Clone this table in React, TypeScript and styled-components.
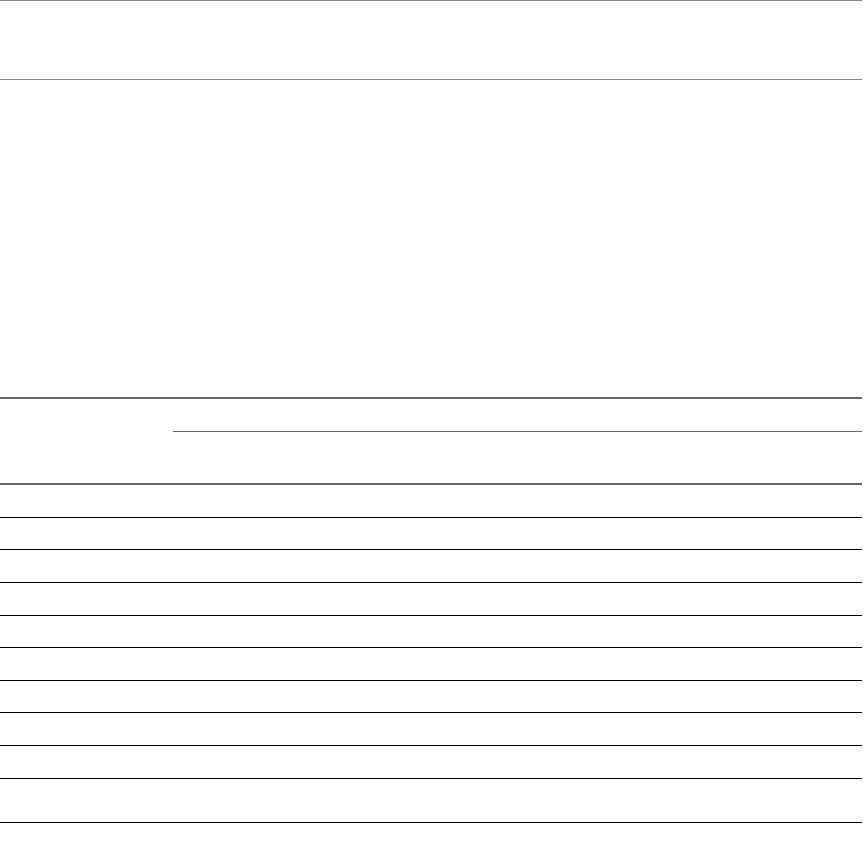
import React, { FC } from "react"
import styled, { createGlobalStyle } from "styled-components"

const GlobalStyle = createGlobalStyle`
  html, body {
    margin: 0;
    padding: 0;
    background: #fff;
    font-family: "Liberation Sans", Arial, sans-serif;
    font-size: 14px;
    color: #fff;
  }
`

const Page = styled.div`
  width: 862px;
`

const Header = styled.header`
  height: 78px;
  border-top: 1px solid #888;
  border-bottom: 1px solid #888;
`

const Intro = styled.section`
  height: 317px;
`

const Table = styled.table`
  width: 100%;
  border-collapse: collapse;
  table-layout: fixed;
  border-top: 2px solid #666;
`

const HeadCell = styled.th<{ $underline?: boolean; $tall?: boolean }>`
  height: ${(p) => (p.$tall ? "51px" : "32px")};
  padding: 0;
  font-weight: normal;
  border-bottom: ${(p) => (p.$underline ? "1px solid #666" : "none")};
`

const HeadRow = styled.tr`
  border-bottom: 2px solid #666;
`

const BodyRow = styled.tr<{ $tall?: boolean }>`
  border-bottom: 1px solid #000;

  td {
    height: ${(p) => (p.$tall ? "43.4px" : "31.65px")};
  }
`

const Cell = styled.td`
  padding: 0;
`

const rows = Array.from({ length: 10 }, (_, i) => i)

const App: FC = () => (
  <>
    <GlobalStyle />
    <Page>
      <Header />
      <Intro />
      <Table>
        <colgroup>
          <col style={{ width: "173px" }} />
          <col style={{ width: "172px" }} />
          <col style={{ width: "173px" }} />
          <col />
        </colgroup>
        <thead>
          <tr>
            <HeadCell rowSpan={2} />
            <HeadCell colSpan={3} $underline />
          </tr>
          <HeadRow>
            <HeadCell $tall />
            <HeadCell $tall />
            <HeadCell $tall />
          </HeadRow>
        </thead>
        <tbody>
          {rows.map((r) => (
            <BodyRow key={r} $tall={r === rows.length - 1}>
              <Cell />
              <Cell />
              <Cell />
              <Cell />
            </BodyRow>
          ))}
        </tbody>
      </Table>
    </Page>
  </>
)

export default App
